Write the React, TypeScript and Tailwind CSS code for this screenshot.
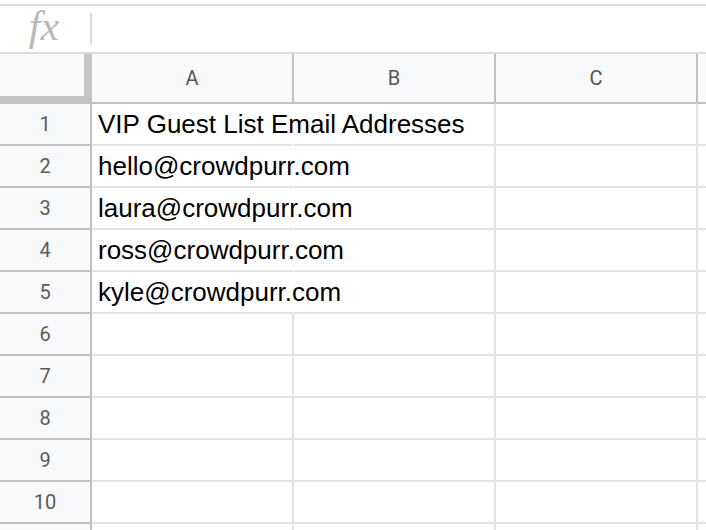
import React from 'react';

const columns = ['A', 'B', 'C'];

const rows: string[][] = [
  ['VIP Guest List Email Addresses', '', ''],
  ['hello@crowdpurr.com', '', ''],
  ['laura@crowdpurr.com', '', ''],
  ['ross@crowdpurr.com', '', ''],
  ['kyle@crowdpurr.com', '', ''],
  ['', '', ''],
  ['', '', ''],
  ['', '', ''],
  ['', '', ''],
  ['', '', ''],
];

const gridCols = 'grid grid-cols-[92px_202px_202px_202px_1fr]';

const App: React.FC = () => {
  return (
    <div className="w-[706px] h-[530px] overflow-hidden bg-white font-['Liberation_Sans',Arial,sans-serif]">
      <div className="h-[4px]" />
      {/* formula bar */}
      <div className="flex items-center h-[50px] border-t-2 border-b-2 border-[#dadce0]">
        <div className="w-[90px] flex justify-center pr-[2px]">
          <span className="font-['Liberation_Serif',serif] italic text-[42px] leading-none text-[#b9b9b9] -mt-[6px]">
            fx
          </span>
        </div>
        <div className="w-[2px] h-[32px] bg-[#dadce0]" />
        <div className="flex-1" />
      </div>

      {/* column header */}
      <div className={`${gridCols} h-[50px] bg-[#f8f9fa] border-b-2 border-[#c0c0c0]`}>
        <div className="border-r-[8px] border-b-[8px] border-[#c4c4c4] -mb-[2px]" />
        {columns.map((c) => (
          <div
            key={c}
            className="flex items-center justify-center border-r-2 border-[#c0c0c0] font-['Roboto',sans-serif] text-[20px] text-[#555]"
          >
            {c}
          </div>
        ))}
        <div />
      </div>

      {/* rows */}
      {rows.map((row, i) => (
        <div key={i} className={`${gridCols} h-[42px]`}>
          <div className="flex items-center justify-center bg-[#f8f9fa] border-r-2 border-b-2 border-r-[#c0c0c0] border-b-[#c0c0c0] font-['Roboto',sans-serif] text-[20px] text-[#5a5a5a]">
            {i + 1}
          </div>
          {row.map((cell, j) => (
            <div
              key={j}
              className={`flex items-center pl-[6px] border-r-2 border-b-2 border-[#e2e2e2] text-[26px] text-black whitespace-nowrap ${
                cell ? 'overflow-visible relative z-10 border-r-transparent' : 'overflow-hidden'
              }`}
            >
              {cell}
            </div>
          ))}
          <div className="border-b-2 border-[#e2e2e2]" />
        </div>
      ))}

      {/* top of the next (clipped) row */}
      <div className={`${gridCols} h-[42px]`}>
        <div className="bg-[#f8f9fa] border-r-2 border-[#c0c0c0]" />
        <div className="border-r-2 border-[#e2e2e2]" />
        <div className="border-r-2 border-[#e2e2e2]" />
        <div className="border-r-2 border-[#e2e2e2]" />
        <div />
      </div>
    </div>
  );
};

export default App;
